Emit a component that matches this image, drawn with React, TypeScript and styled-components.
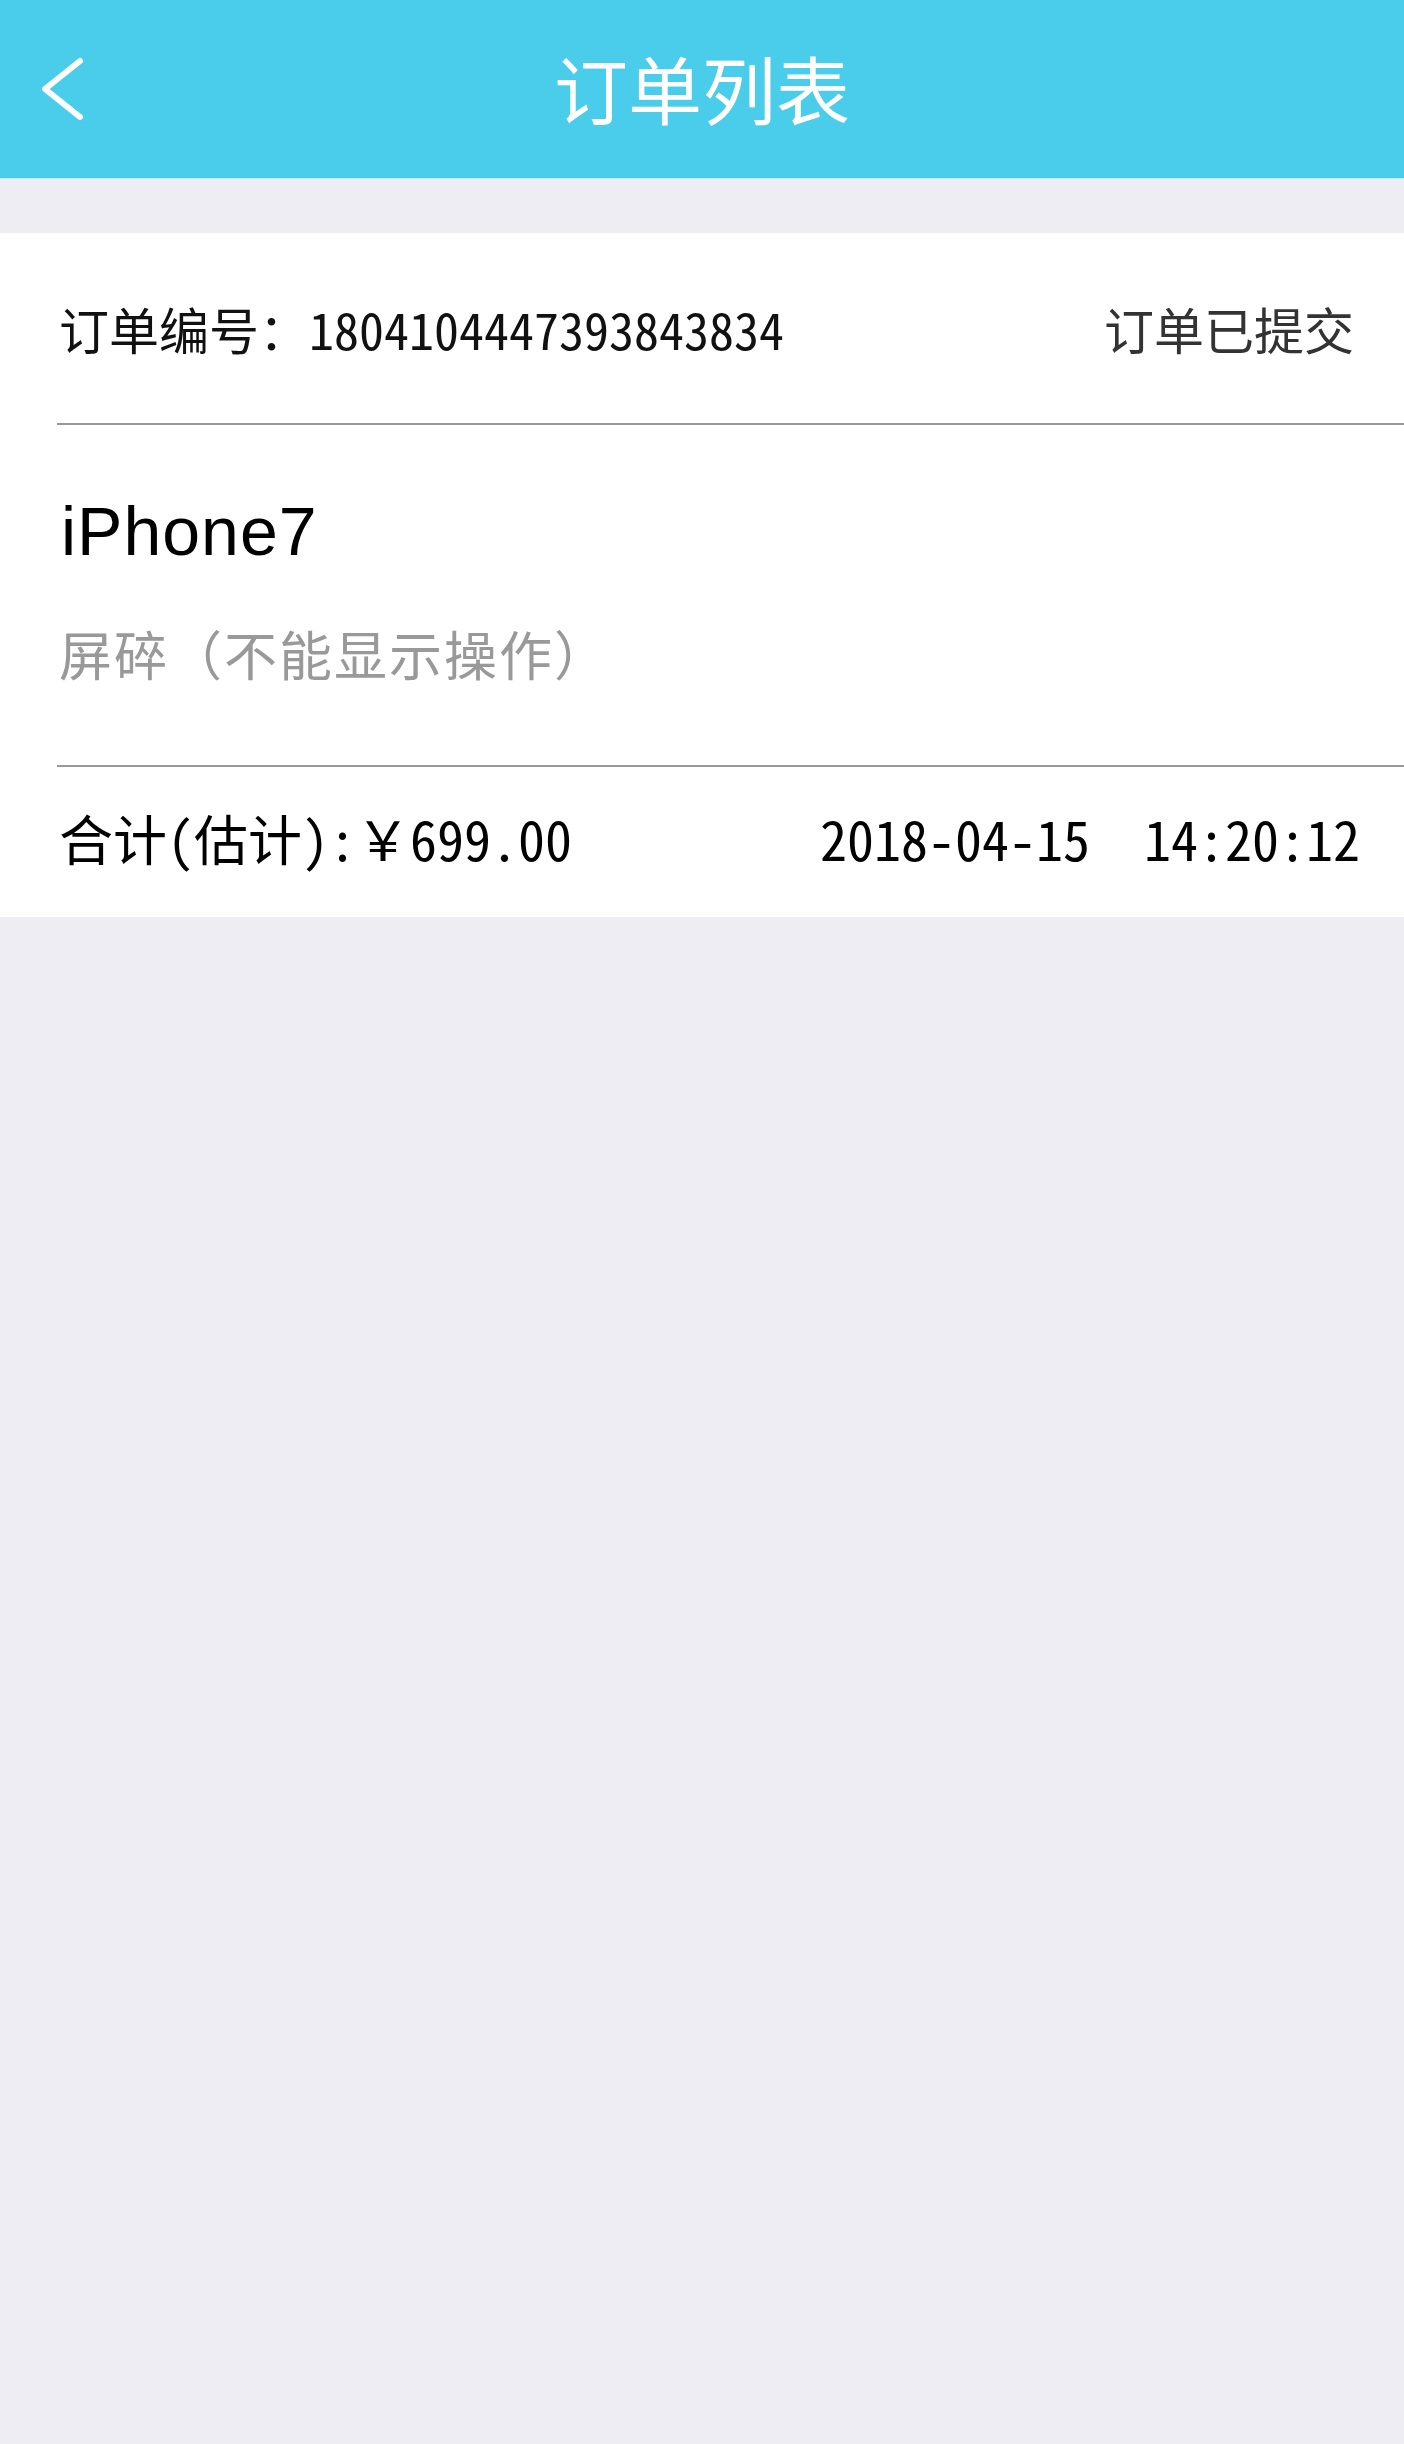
import React from "react";
import styled, { createGlobalStyle } from "styled-components";

const order = {
  no: "1804104447393843834",
  status: "订单已提交",
  model: "iPhone7",
  fault: "屏碎（不能显示操作）",
  total: "合计(估计):￥699.00",
  time: "2018-04-15  14:20:12",
};

export default function App() {
  return (
    <Page>
      <GlobalStyle />
      <Header>
        <Back aria-label="返回">
          <svg width="48" height="68" viewBox="0 0 48 68" fill="none">
            <polyline
              points="40,6 5,34 40,62"
              stroke="#fff"
              strokeWidth="6"
              strokeLinecap="round"
              strokeLinejoin="round"
            />
          </svg>
        </Back>
        <Title>订单列表</Title>
        <span />
      </Header>

      <Card>
        <OrderHead>
          <OrderNo>订单编号：{order.no}</OrderNo>
          <Status>{order.status}</Status>
        </OrderHead>
        <Line />
        <Product>
          <Model>{order.model}</Model>
          <Fault>{order.fault}</Fault>
        </Product>
        <Line />
        <OrderFoot>
          <Mono>{order.total}</Mono>
          <Mono>{order.time}</Mono>
        </OrderFoot>
      </Card>
    </Page>
  );
}

const GlobalStyle = createGlobalStyle`
  html, body {
    margin: 0;
    padding: 0;
    background-color: #efedf4;
  }
  body {
    font-family: "Noto Sans CJK SC", "Noto Sans", sans-serif;
  }
`;

const Page = styled.div`
  min-height: 2444px;
  background-color: #efedf4;
`;

const Header = styled.header`
  display: grid;
  grid-template-columns: 1fr auto 1fr;
  align-items: center;
  height: 178px;
  background-color: #49cdea;
  border-bottom: 1px solid #c6e9f2;
`;

const Back = styled.button`
  justify-self: start;
  display: flex;
  margin: 0 0 0 40px;
  padding: 0;
  border: 0;
  background: none;
  cursor: pointer;
`;

const Title = styled.h1`
  margin: 0;
  padding-bottom: 5px;
  font-size: 74px;
  font-weight: 400;
  line-height: 1;
  color: #fff;
`;

const Card = styled.section`
  margin-top: 54px;
  background-color: #fff;
`;

const OrderHead = styled.div`
  display: flex;
  align-items: center;
  justify-content: space-between;
  height: 190px;
  padding: 0 50px 0 59px;
  font-size: 50px;
  line-height: 1;
`;

const OrderNo = styled.span`
  font-family: "Noto Sans Mono CJK SC", "Noto Sans CJK SC", monospace;
  color: #111;
`;

const Status = styled.span`
  color: #333;
`;

const Line = styled.div`
  margin-left: 57px;
  height: 2px;
  background-color: #999;
`;

const Product = styled.div`
  display: flex;
  flex-direction: column;
  padding: 72px 0 85px 61px;
`;

const Model = styled.div`
  font-family: "Liberation Sans", Arial, sans-serif;
  font-size: 68px;
  line-height: 68px;
  letter-spacing: 1px;
  color: #000;
`;

const Fault = styled.div`
  margin-top: 62px;
  margin-left: -2px;
  font-size: 53px;
  line-height: 53px;
  letter-spacing: 2px;
  color: #999;
`;

const OrderFoot = styled.div`
  display: flex;
  align-items: center;
  justify-content: space-between;
  height: 150px;
  padding: 0 44px 8px 59px;
  box-sizing: border-box;
`;

const Mono = styled.span`
  font-family: "Noto Sans Mono CJK SC", "Noto Sans CJK SC", monospace;
  font-size: 54px;
  line-height: 1;
  white-space: pre;
  color: #000;
`;
